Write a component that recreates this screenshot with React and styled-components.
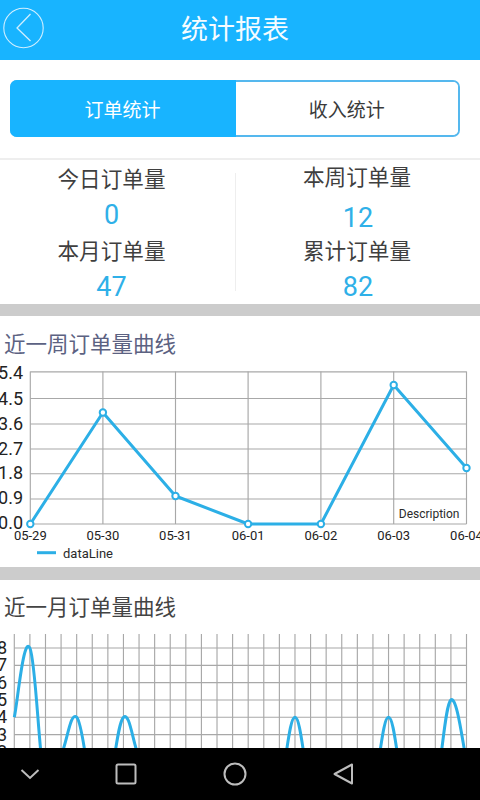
import React from "react";
import styled, { createGlobalStyle } from "styled-components";

const CJK = `"Noto Sans CJK SC", "Roboto", sans-serif`;
const NUM = `"Roboto", "Noto Sans CJK SC", sans-serif`;
const BLUE = "#18b4ff";
const LINE = "#2cafe6";
const GRID = "#a8a8a8";

const Global = createGlobalStyle`
  html, body { margin: 0; padding: 0; background: #fff; }
`;

const Screen = styled.div`
  width: 480px;
  height: 800px;
  display: flex;
  flex-direction: column;
  overflow: hidden;
  font-family: ${CJK};
`;
const Scroll = styled.main`
  flex: 1;
  min-height: 0;
  overflow: hidden;
`;
const Header = styled.header`
  height: 60px;
  background: ${BLUE};
  display: grid;
  grid-template-columns: 178px auto 1fr;
  align-items: center;
  padding-left: 3px;
`;
const BackButton = styled.svg`
  width: 42px;
  height: 42px;
  display: block;
  margin-top: -5px;
`;
const Title = styled.h1`
  margin: -4px 0 0;
  font-size: 27px;
  font-weight: 400;
  color: #fff;
  line-height: 36px;
  opacity: 0.96;
`;
const TabWrap = styled.div`
  padding: 20px 20.5px 21px 10px;
  border-bottom: 2px solid #eeeeee;
`;
const Tabs = styled.div`
  height: 57px;
  box-sizing: border-box;
  border: 2px solid #55b8ee;
  border-radius: 7px;
  display: grid;
  grid-template-columns: 224px 1fr;
`;
const Tab = styled.div`
  display: flex;
  align-items: center;
  justify-content: center;
  padding-right: ${(p) => (p.$active ? 1 : 0)}px;
  margin: ${(p) => (p.$active ? "-2px 0 -2px -2px" : "0")};
  border-radius: ${(p) => (p.$active ? "7px 0 0 7px" : "0 5px 5px 0")};
  font-size: 19px;
  background: ${(p) => (p.$active ? BLUE : "#fff")};
  color: ${(p) => (p.$active ? "#fff" : "#3a3a3a")};
`;
const Stats = styled.section`
  height: 144px;
  display: grid;
  grid-template-columns: 235px 1px 1fr;
  overflow: hidden;
`;
const StatColumn = styled.div`
  display: flex;
  flex-direction: column;
  align-items: center;
  padding-top: 1px;
  padding-right: ${(p) => p.$inset || 0}px;
`;
const Divider = styled.div`
  margin: 13px 0 14px;
  background: #eeeeee;
`;
const StatLabel = styled.div`
  height: 36px;
  line-height: 34px;
  font-size: 21.6px;
  color: #3f3f3f;
  margin-top: ${(p) => p.$shift || 0}px;
  padding-right: ${(p) => p.$nudge || 0}px;
`;
const StatValue = styled.div`
  height: 36px;
  line-height: 36px;
  font-family: ${NUM};
  font-size: 27px;
  color: #2fb0e8;
  margin-top: ${(p) => p.$shift || 0}px;
`;
const Band = styled.div`
  height: ${(p) => p.$h}px;
  background: #cccccc;
`;
const SectionTitle = styled.h2`
  margin: ${(p) => p.$top}px 0 2px;
  padding-left: 4px;
  font-size: 21.5px;
  font-weight: 400;
  line-height: 30px;
  color: ${(p) => p.$color};
`;
const Chart = styled.svg`
  display: block;
  width: 480px;
  height: ${(p) => p.$h}px;
`;
const GridLine = styled.line`
  stroke: ${GRID};
  stroke-width: 1.15;
`;
const Curve = styled.path`
  fill: none;
  stroke: ${LINE};
  stroke-width: 3;
  stroke-linejoin: round;
`;
const Dot = styled.circle`
  fill: #fff;
  stroke: ${LINE};
  stroke-width: 2;
`;
const AxisY = styled.text`
  font-family: ${NUM};
  font-size: 18px;
  fill: #222;
  text-anchor: end;
`;
const AxisX = styled.text`
  font-family: ${NUM};
  font-size: 13px;
  fill: #222;
  text-anchor: middle;
`;
const Caption = styled.text`
  font-family: ${NUM};
  font-size: ${(p) => p.$size}px;
  fill: #2a2a2a;
  text-anchor: ${(p) => p.$anchor || "start"};
`;
const NavBar = styled.nav`
  height: 52px;
  flex: none;
  background: #000;
  display: grid;
  grid-template-columns: 96px 109px 108px 24px;
  align-items: center;
  padding-left: 18px;
`;
const NavIcon = styled.svg`
  display: block;
  width: 24px;
  height: 24px;
  fill: none;
  stroke: #bdbdbd;
  stroke-width: 2;
`;

const weekX = [30.3, 102.9, 175.5, 248.1, 320.9, 393.7, 466.5];
const weekLabels = ["05-29", "05-30", "05-31", "06-01", "06-02", "06-03", "06-04"];
const weekTicks = [
  ["5.4", 371.8, 379],
  ["4.5", 398.5, 404.7],
  ["3.6", 424, 429.6],
  ["2.7", 449, 454.5],
  ["1.8", 473.7, 479.2],
  ["0.9", 499, 504.2],
  ["0.0", 524, 529],
];
const weekPoints = [
  [30.3, 524],
  [102.9, 412.5],
  [175.5, 496],
  [248.1, 524],
  [320.9, 524],
  [393.7, 385],
  [466.5, 468],
];

const monthX = Array.from({ length: 30 }, (_, i) => 14.3 + i * 15.593);
const monthY = Array.from({ length: 7 }, (_, i) => 648 + i * 17.32);
const monthTicks = ["8", "7", "6", "5", "4", "3", "2"];
const monthData = [
  4, 8, 0, 1.8, 4, 0, 0, 4, 1.7, 0, 0, 0, 0, 0, 0, 0, 0, 0, 4, 0, 0, 0, 0, 0, 4, 0, 0, 0, 5, 1.5,
];

function cubicPath(values) {
  const pts = values.map((v, i) => [monthX[i], 648 + (8 - v) * 17.32]);
  const k = 0.2;
  let d = `M${pts[0][0]} ${pts[0][1]}`;
  for (let i = 1; i < pts.length; i++) {
    const a = pts[Math.max(i - 2, 0)];
    const b = pts[i - 1];
    const c = pts[i];
    const e = pts[Math.min(i + 1, pts.length - 1)];
    const c1x = b[0] + (c[0] - a[0]) * k;
    const c1y = b[1] + (c[1] - a[1]) * k;
    const c2x = c[0] - (e[0] - b[0]) * k;
    const c2y = c[1] - (e[1] - b[1]) * k;
    d += ` C${c1x.toFixed(1)} ${c1y.toFixed(1)} ${c2x.toFixed(1)} ${c2y.toFixed(1)} ${c[0].toFixed(1)} ${c[1].toFixed(1)}`;
  }
  return d;
}

function WeekChart() {
  return (
    <Chart $h={207} viewBox="0 360 480 207">
      {weekX.map((x) => (
        <GridLine key={x} x1={x} x2={x} y1={371.5} y2={524} />
      ))}
      {weekTicks.map(([t, y]) => (
        <GridLine key={t} x1={30.3} x2={466.5} y1={y} y2={y} />
      ))}
      {weekTicks.map(([t, , base]) => (
        <AxisY key={t} x={23} y={base}>
          {t}
        </AxisY>
      ))}
      {weekLabels.map((t, i) => (
        <AxisX key={t} x={weekX[i]} y={539.5}>
          {t}
        </AxisX>
      ))}
      <Curve d={`M${weekPoints.map((p) => p.join(" ")).join(" L")}`} />
      {weekPoints.map(([x, y]) => (
        <Dot key={x} cx={x} cy={y} r={3.2} />
      ))}
      <Caption $size={12} $anchor="end" x={459.5} y={518}>
        Description
      </Caption>
      <Curve as="line" x1={37} x2={56} y1={552.7} y2={552.7} />
      <Caption $size={13} x={63} y={557.5}>
        dataLine
      </Caption>
    </Chart>
  );
}

function MonthChart() {
  return (
    <Chart $h={140} viewBox="0 623 480 140">
      {monthX.map((x) => (
        <GridLine key={x} x1={x} x2={x} y1={634} y2={763} />
      ))}
      {monthY.map((y) => (
        <GridLine key={y} x1={14.3} x2={466.5} y1={y} y2={y} />
      ))}
      {monthTicks.map((t, i) => (
        <AxisY key={t} x={7} y={monthY[i] + 6}>
          {t}
        </AxisY>
      ))}
      <Curve d={cubicPath(monthData)} />
    </Chart>
  );
}

export default function App() {
  return (
    <Screen>
      <Global />
      <Scroll>
        <Header>
          <BackButton viewBox="0 0 42 42" fill="none" stroke="#cfeeff" strokeWidth="1.1">
            <circle cx="20.5" cy="21" r="19.7" />
            <path d="M27.5 7 L14 21 L27.5 34" strokeWidth="1.3" />
          </BackButton>
          <Title>统计报表</Title>
          <span />
        </Header>
        <TabWrap>
          <Tabs>
            <Tab $active>订单统计</Tab>
            <Tab>收入统计</Tab>
          </Tabs>
        </TabWrap>
        <Stats>
          <StatColumn $inset={12}>
            <StatLabel>今日订单量</StatLabel>
            <StatValue>0</StatValue>
            <StatLabel>本月订单量</StatLabel>
            <StatValue>47</StatValue>
          </StatColumn>
          <Divider />
          <StatColumn>
            <StatLabel $shift={-2} $nudge={2}>本周订单量</StatLabel>
            <StatValue $shift={5}>12</StatValue>
            <StatLabel $shift={-3} $nudge={2}>累计订单量</StatLabel>
            <StatValue>82</StatValue>
          </StatColumn>
        </Stats>
        <Band $h={12} />
        <SectionTitle $top={12} $color="#5c6282">近一周订单量曲线</SectionTitle>
        <WeekChart />
        <Band $h={13} />
        <SectionTitle $top={11} $color="#444444">近一月订单量曲线</SectionTitle>
        <MonthChart />
      </Scroll>
      <NavBar>
        <NavIcon viewBox="0 0 24 24">
          <path d="M3.5 8 L12 16 L20.5 8" />
        </NavIcon>
        <NavIcon viewBox="0 0 24 24">
          <rect x="2.5" y="2.5" width="19" height="19" rx="1.5" />
        </NavIcon>
        <NavIcon viewBox="0 0 24 24">
          <circle cx="12" cy="12" r="10.5" />
        </NavIcon>
        <NavIcon viewBox="0 0 24 24">
          <path d="M3.5 12 L21 2.5 L21 21.5 Z" strokeLinejoin="round" />
        </NavIcon>
      </NavBar>
    </Screen>
  );
}
